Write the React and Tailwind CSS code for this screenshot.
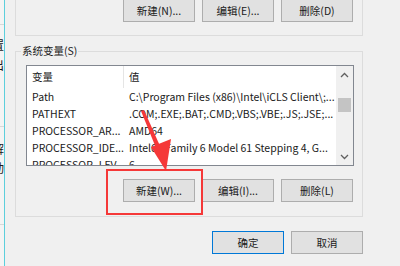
import React from "react";

const font = { fontFamily: '"Noto Sans CJK SC", "Noto Sans", sans-serif' };

function Btn({ children, primary }) {
  return (
    <div
      className={
        "w-[72px] h-[23px] flex items-center justify-center bg-[#e1e1e1] border text-[10.5px] text-[#1a1a1a] " +
        (primary ? "border-[#0078d7]" : "border-[#adadad]")
      }
    >
      {children}
    </div>
  );
}

const rows = [
  ["Path", "C:\\Program Files (x86)\\Intel\\iCLS Client\\;..."],
  ["PATHEXT", ".COM;.EXE;.BAT;.CMD;.VBS;.VBE;.JS;.JSE;..."],
  ["PROCESSOR_AR...", "AMD64"],
  ["PROCESSOR_IDE...", "Intel64 Family 6 Model 61 Stepping 4, G..."],
  ["PROCESSOR_LEV...", "6"],
];

export default function App() {
  return (
    <div
      className="relative w-[400px] h-[266px] bg-[#f0f0f0] flex overflow-hidden text-[#1a1a1a]"
      style={font}
    >
      {/* left strip of window behind */}
      <div className="w-[4px] h-full bg-[#f4f4f4] flex flex-col overflow-hidden">
        <div className="h-[25px] border-b border-[#d8d8d8]" />
        <div className="h-[10px]" />
        <div className="flex justify-end text-[12px] leading-[20px] whitespace-nowrap">
          <span>设置</span>
        </div>
        <div className="flex justify-end text-[12px] leading-[20px] whitespace-nowrap">
          <span>输出</span>
        </div>
        <div className="h-[52px] border-b border-[#d8d8d8]" />
        <div className="h-[12px]" />
        <div className="flex justify-end text-[12px] leading-[20px] whitespace-nowrap">
          <span>分解</span>
        </div>
        <div className="flex justify-end text-[12px] leading-[18px] whitespace-nowrap">
          <span>启动</span>
        </div>
        <div className="h-[48px] border-b border-[#d8d8d8]" />
      </div>
      <div className="w-[1px] h-full bg-[#5ccfdc]" />

      {/* main dialog */}
      <div className="flex-1 flex flex-col pl-[10px]">
        {/* user variables group (cut off) */}
        <div className="w-[348px] h-[46px] mt-[-10px] border-x border-b border-[#dcdcdc] flex justify-end items-end gap-[7px] pr-[9px] pb-[13px]">
          <Btn>新建(N)...</Btn>
          <Btn>编辑(E)...</Btn>
          <Btn>删除(D)</Btn>
        </div>

        {/* system variables */}
        <fieldset className="w-[348px] mt-[7px] border border-[#dcdcdc] p-0 m-0 min-w-0">
          <legend className="ml-[5px] px-[1px] text-[10.5px] leading-[16px]">
            系统变量(S)
          </legend>
          <div className="ml-[10px] mt-[6px] w-[328px] h-[101px] border border-[#828790] bg-white flex overflow-hidden">
            <div className="flex-1 flex flex-col overflow-hidden text-[10.5px]">
              <div className="h-[22px] flex shrink-0">
                <div className="w-[97px] border-r border-[#e5e5e5] pl-[5px] flex items-center">
                  变量
                </div>
                <div className="flex-1 pl-[5px] flex items-center">值</div>
              </div>
              {rows.map(([k, v]) => (
                <div key={k} className="h-[17px] flex shrink-0 items-center whitespace-nowrap">
                  <div className="w-[98px] pl-[5px] overflow-hidden">{k}</div>
                  <div className="flex-1 pl-[4px] overflow-hidden">{v}</div>
                </div>
              ))}
            </div>
            <div className="w-[17px] h-full bg-[#f0f0f0] flex flex-col items-center">
              <svg width="17" height="17" viewBox="0 0 17 17" className="mt-[1px]">
                <path d="M5 10 L8.5 6.5 L12 10" fill="none" stroke="#606060" strokeWidth="1.3" />
              </svg>
              <div className="mt-[14px] w-[13px] h-[14px] bg-[#c4c4c4]" />
              <div className="flex-1" />
              <svg width="17" height="17" viewBox="0 0 17 17">
                <path d="M5 7 L8.5 10.5 L12 7" fill="none" stroke="#606060" strokeWidth="1.3" />
              </svg>
            </div>
          </div>
          <div className="mt-[13px] mb-[14px] flex justify-end gap-[7px] pr-[9px]">
            <Btn>新建(W)...</Btn>
            <Btn>编辑(I)...</Btn>
            <Btn>删除(L)</Btn>
          </div>
        </fieldset>

        {/* OK / Cancel */}
        <div className="w-[348px] mt-[14px] flex justify-end gap-[7px]">
          <Btn primary>确定</Btn>
          <Btn>取消</Btn>
        </div>
      </div>

      {/* red annotation box */}
      <div className="absolute left-[106px] top-[169px] w-[97px] h-[46px] border-2 border-[#f53838]" />
      {/* red arrow */}
      <svg className="absolute left-0 top-0" width="400" height="266" viewBox="0 0 400 266">
        <polygon points="141,111 144,110 160,146 156,148" fill="#f53838" />
        <polygon points="151,147 171,139 166,171" fill="#f53838" />
      </svg>
    </div>
  );
}
